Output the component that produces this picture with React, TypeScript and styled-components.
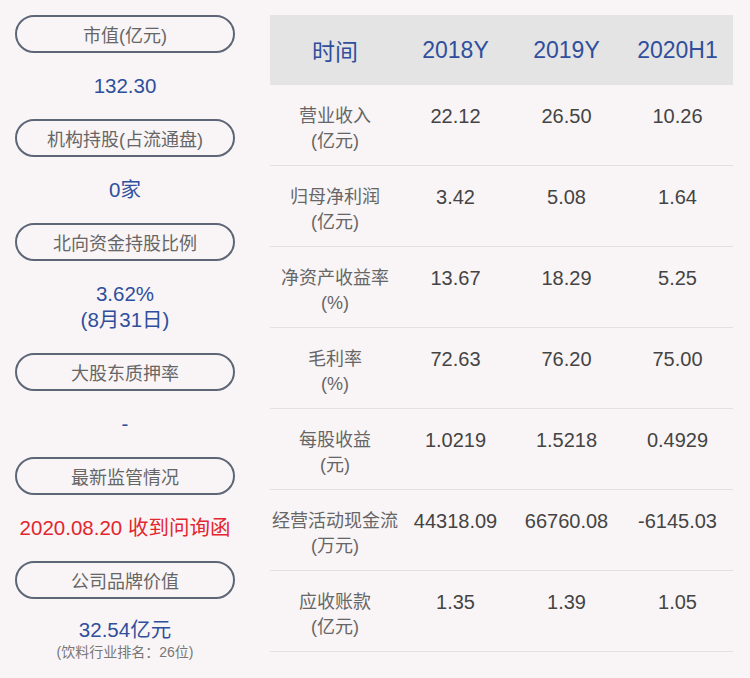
import React from 'react';
import styled, { createGlobalStyle } from 'styled-components';

const GlobalStyle = createGlobalStyle`
  html, body {
    margin: 0;
    padding: 0;
    background: #f9f5f6;
  }
  body {
    font-family: "Liberation Sans", "Noto Sans CJK SC", sans-serif;
  }
`;

const Page = styled.div`
  width: 750px;
  height: 678px;
  box-sizing: border-box;
  padding: 15px 17px 0 15px;
  display: flex;
  align-items: flex-start;
  gap: 35px;
  background: #f9f5f6;
`;

const Side = styled.div`
  width: 220px;
  display: flex;
  flex-direction: column;
`;

const Pill = styled.div`
  height: 38px;
  box-sizing: border-box;
  border: 2px solid #5d6676;
  border-radius: 19px;
  display: flex;
  align-items: center;
  justify-content: center;
  font-size: 18px;
  color: #666;
`;

const Value = styled.div<{ $red?: boolean }>`
  padding: 20px 0;
  text-align: center;
  font-size: 20.5px;
  line-height: 26px;
  color: ${(p) => (p.$red ? '#e3262f' : '#2f4f9c')};
`;

const LastValue = styled(Value)`
  padding: 18px 0 0;
`;

const Note = styled.div`
  font-size: 14px;
  line-height: 19px;
  color: #777;
  text-align: center;
`;

const Table = styled.div`
  width: 463px;
  display: grid;
  grid-template-columns: 130px repeat(3, 111px);
  align-content: start;
`;

const Head = styled.div`
  height: 70px;
  background: #e4e4e4;
  display: flex;
  align-items: center;
  justify-content: center;
  font-size: 23px;
  color: #2f4f9c;
`;

const Cell = styled.div<{ $label?: boolean }>`
  height: 81px;
  box-sizing: border-box;
  border-bottom: 1px solid #e2e0e1;
  padding-top: 19px;
  text-align: center;
  font-size: ${(p) => (p.$label ? '18px' : '20px')};
  line-height: 25px;
  color: ${(p) => (p.$label ? '#666' : '#444')};
  white-space: nowrap;
`;

const side: { title: string; lines: string[]; red?: boolean }[] = [
  { title: '市值(亿元)', lines: ['132.30'] },
  { title: '机构持股(占流通盘)', lines: ['0家'] },
  { title: '北向资金持股比例', lines: ['3.62%', '(8月31日)'] },
  { title: '大股东质押率', lines: ['-'] },
  { title: '最新监管情况', lines: ['2020.08.20 收到问询函'], red: true },
];

const rows: [string, string, string[]][] = [
  ['营业收入', '(亿元)', ['22.12', '26.50', '10.26']],
  ['归母净利润', '(亿元)', ['3.42', '5.08', '1.64']],
  ['净资产收益率', '(%)', ['13.67', '18.29', '5.25']],
  ['毛利率', '(%)', ['72.63', '76.20', '75.00']],
  ['每股收益', '(元)', ['1.0219', '1.5218', '0.4929']],
  ['经营活动现金流', '(万元)', ['44318.09', '66760.08', '-6145.03']],
  ['应收账款', '(亿元)', ['1.35', '1.39', '1.05']],
];

const App: React.FunctionComponent = () => {
  return (
    <Page>
      <GlobalStyle />
      <Side>
        {side.map((s) => (
          <React.Fragment key={s.title}>
            <Pill>{s.title}</Pill>
            <Value $red={s.red}>
              {s.lines.map((l) => (
                <div key={l}>{l}</div>
              ))}
            </Value>
          </React.Fragment>
        ))}
        <Pill>公司品牌价值</Pill>
        <LastValue>32.54亿元</LastValue>
        <Note>(饮料行业排名：26位)</Note>
      </Side>
      <Table>
        <Head>时间</Head>
        <Head>2018Y</Head>
        <Head>2019Y</Head>
        <Head>2020H1</Head>
        {rows.map(([name, unit, vals]) => (
          <React.Fragment key={name}>
            <Cell $label>
              <div>{name}</div>
              <div>{unit}</div>
            </Cell>
            {vals.map((v, i) => (
              <Cell key={i}>{v}</Cell>
            ))}
          </React.Fragment>
        ))}
      </Table>
    </Page>
  );
};

export default App;
